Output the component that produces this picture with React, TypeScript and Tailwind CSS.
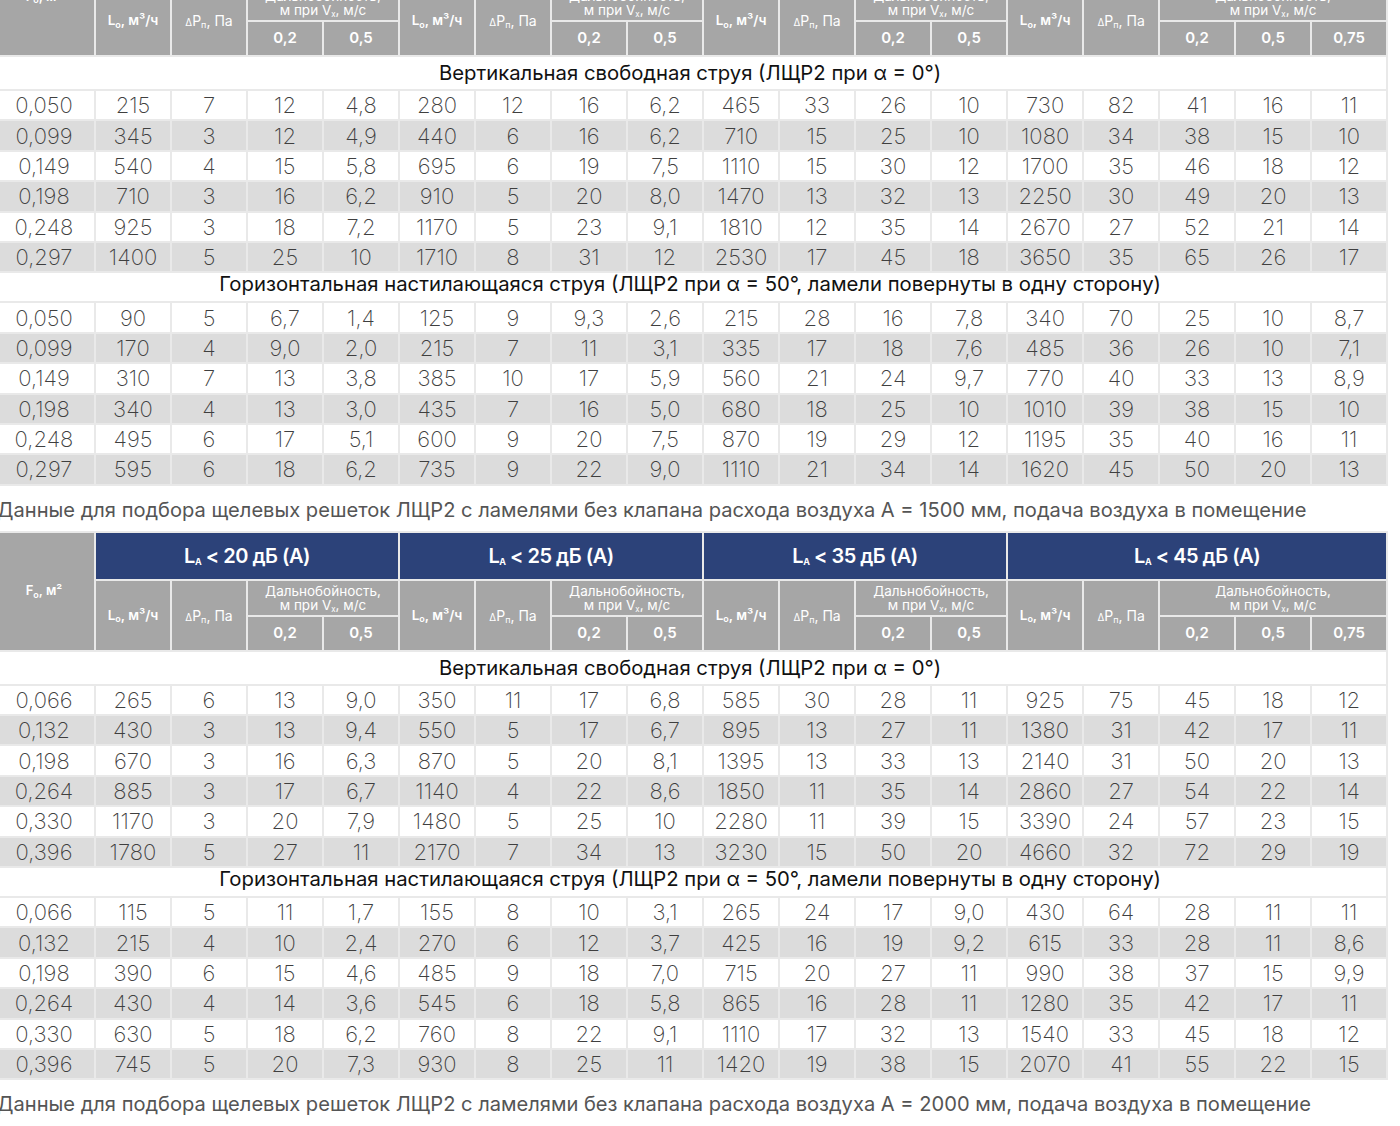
import React from "react";

type Section = { title: string; rows: string[][] };
type Block = { sections: Section[]; caption: string };

const vTitle = "Вертикальная свободная струя (ЛЩР2 при α = 0°)";
const hTitle = "Горизонтальная настилающаяся струя (ЛЩР2 при α = 50°, ламели повернуты в одну сторону)";

const rows = (s: string) => s.trim().split("\n").map((r) => r.trim().split(/\s+/));

const blocks: Block[] = [
  {
    sections: [
      {
        title: vTitle,
        rows: rows(`
          0,050 215 7 12 4,8 280 12 16 6,2 465 33 26 10 730 82 41 16 11
          0,099 345 3 12 4,9 440 6 16 6,2 710 15 25 10 1080 34 38 15 10
          0,149 540 4 15 5,8 695 6 19 7,5 1110 15 30 12 1700 35 46 18 12
          0,198 710 3 16 6,2 910 5 20 8,0 1470 13 32 13 2250 30 49 20 13
          0,248 925 3 18 7,2 1170 5 23 9,1 1810 12 35 14 2670 27 52 21 14
          0,297 1400 5 25 10 1710 8 31 12 2530 17 45 18 3650 35 65 26 17
        `),
      },
      {
        title: hTitle,
        rows: rows(`
          0,050 90 5 6,7 1,4 125 9 9,3 2,6 215 28 16 7,8 340 70 25 10 8,7
          0,099 170 4 9,0 2,0 215 7 11 3,1 335 17 18 7,6 485 36 26 10 7,1
          0,149 310 7 13 3,8 385 10 17 5,9 560 21 24 9,7 770 40 33 13 8,9
          0,198 340 4 13 3,0 435 7 16 5,0 680 18 25 10 1010 39 38 15 10
          0,248 495 6 17 5,1 600 9 20 7,5 870 19 29 12 1195 35 40 16 11
          0,297 595 6 18 6,2 735 9 22 9,0 1110 21 34 14 1620 45 50 20 13
        `),
      },
    ],
    caption:
      "Данные для подбора щелевых решеток ЛЩР2 с ламелями без клапана расхода воздуха А = 1500 мм, подача воздуха в помещение",
  },
  {
    sections: [
      {
        title: vTitle,
        rows: rows(`
          0,066 265 6 13 9,0 350 11 17 6,8 585 30 28 11 925 75 45 18 12
          0,132 430 3 13 9,4 550 5 17 6,7 895 13 27 11 1380 31 42 17 11
          0,198 670 3 16 6,3 870 5 20 8,1 1395 13 33 13 2140 31 50 20 13
          0,264 885 3 17 6,7 1140 4 22 8,6 1850 11 35 14 2860 27 54 22 14
          0,330 1170 3 20 7,9 1480 5 25 10 2280 11 39 15 3390 24 57 23 15
          0,396 1780 5 27 11 2170 7 34 13 3230 15 50 20 4660 32 72 29 19
        `),
      },
      {
        title: hTitle,
        rows: rows(`
          0,066 115 5 11 1,7 155 8 10 3,1 265 24 17 9,0 430 64 28 11 11
          0,132 215 4 10 2,4 270 6 12 3,7 425 16 19 9,2 615 33 28 11 8,6
          0,198 390 6 15 4,6 485 9 18 7,0 715 20 27 11 990 38 37 15 9,9
          0,264 430 4 14 3,6 545 6 18 5,8 865 16 28 11 1280 35 42 17 11
          0,330 630 5 18 6,2 760 8 22 9,1 1110 17 32 13 1540 33 45 18 12
          0,396 745 5 20 7,3 930 8 25 11 1420 19 38 15 2070 41 55 22 15
        `),
      },
    ],
    caption:
      "Данные для подбора щелевых решеток ЛЩР2 с ламелями без клапана расхода воздуха А = 2000 мм, подача воздуха в помещение",
  },
];

const groups = [
  { db: "20", speeds: ["0,2", "0,5"] },
  { db: "25", speeds: ["0,2", "0,5"] },
  { db: "35", speeds: ["0,2", "0,5"] },
  { db: "45", speeds: ["0,2", "0,5", "0,75"] },
];

const cell = "border-2 border-[#e9e9e9] p-0 text-center";
const head = `${cell} bg-[#a6a6a6] text-white`;

function HeadRows() {
  return (
    <thead>
      <tr className="h-[48px]">
        <th rowSpan={3} className={`${head} text-[13px] font-semibold`}>
          F<sub className="text-[9px]">о</sub>, м²
        </th>
        {groups.map((g) => (
          <th
            key={g.db}
            colSpan={g.speeds.length + 2}
            className={`${cell} bg-[#2c4279] text-white text-[20px] font-semibold tracking-tight`}
          >
            L<sub className="text-[9px] font-bold">A</sub> &lt; {g.db} дБ (А)
          </th>
        ))}
      </tr>
      <tr className="h-[36px]">
        {groups.map((g) => (
          <React.Fragment key={g.db}>
            <th rowSpan={2} className={`${head} text-[13.5px] font-semibold`}>
              L<sub className="text-[9px]">о</sub>, м³/ч
            </th>
            <th rowSpan={2} className={`${head} text-[14px] font-normal`}>
              <span className="text-[10px]">Δ</span>P<sub className="text-[9px]">п</sub>, Па
            </th>
            <th colSpan={g.speeds.length} className={`${head} text-[13.5px] font-normal leading-[14px]`}>
              Дальнобойность,
              <br />м при V<sub className="text-[8px]">х</sub>, м/с
            </th>
          </React.Fragment>
        ))}
      </tr>
      <tr className="h-[35px]">
        {groups.map((g) =>
          g.speeds.map((s, i) => (
            <th key={g.db + i} className={`${head} text-[15px] font-semibold`}>
              {s}
            </th>
          ))
        )}
      </tr>
    </thead>
  );
}

function DataTable({ sections }: { sections: Section[] }) {
  return (
    <table className="table-fixed border-collapse w-[1394px] font-['Inter',sans-serif]">
      <colgroup>
        <col className="w-[102px]" />
        {Array.from({ length: 17 }).map((_, i) => (
          <col key={i} className="w-[76px]" />
        ))}
      </colgroup>
      <HeadRows />
      <tbody>
        {sections.map((sec, si) => (
          <React.Fragment key={si}>
            <tr className={si === 0 ? "h-[34px]" : "h-[30px]"}>
              <td
                colSpan={18}
                className={`${cell} bg-white text-[20.3px] leading-[20px] text-[#111] font-normal ${si === 0 ? "" : "pb-[6px]"}`}
              >
                {sec.title}
              </td>
            </tr>
            {sec.rows.map((r, ri) => (
              <tr key={ri} className={`h-[30.4px] ${ri % 2 ? "bg-[#dcdcdc]" : "bg-white"}`}>
                {r.map((v, ci) => (
                  <td key={ci} className={`${cell} text-[22px] font-extralight text-[#3f3f3f] leading-none`}>
                    {v}
                  </td>
                ))}
              </tr>
            ))}
          </React.Fragment>
        ))}
      </tbody>
    </table>
  );
}

export default function App() {
  return (
    <div className="bg-white min-h-screen overflow-hidden">
      <div className="-mt-[64px] -ml-[8px] w-[1394px]">
        {blocks.map((b, i) => (
          <div key={i}>
            <DataTable sections={b.sections} />
            <div className="h-[45px] pt-[3px] flex items-center pl-[5px] text-[20.1px] text-[#555] font-['Inter',sans-serif] whitespace-nowrap">
              {b.caption}
            </div>
          </div>
        ))}
      </div>
    </div>
  );
}
